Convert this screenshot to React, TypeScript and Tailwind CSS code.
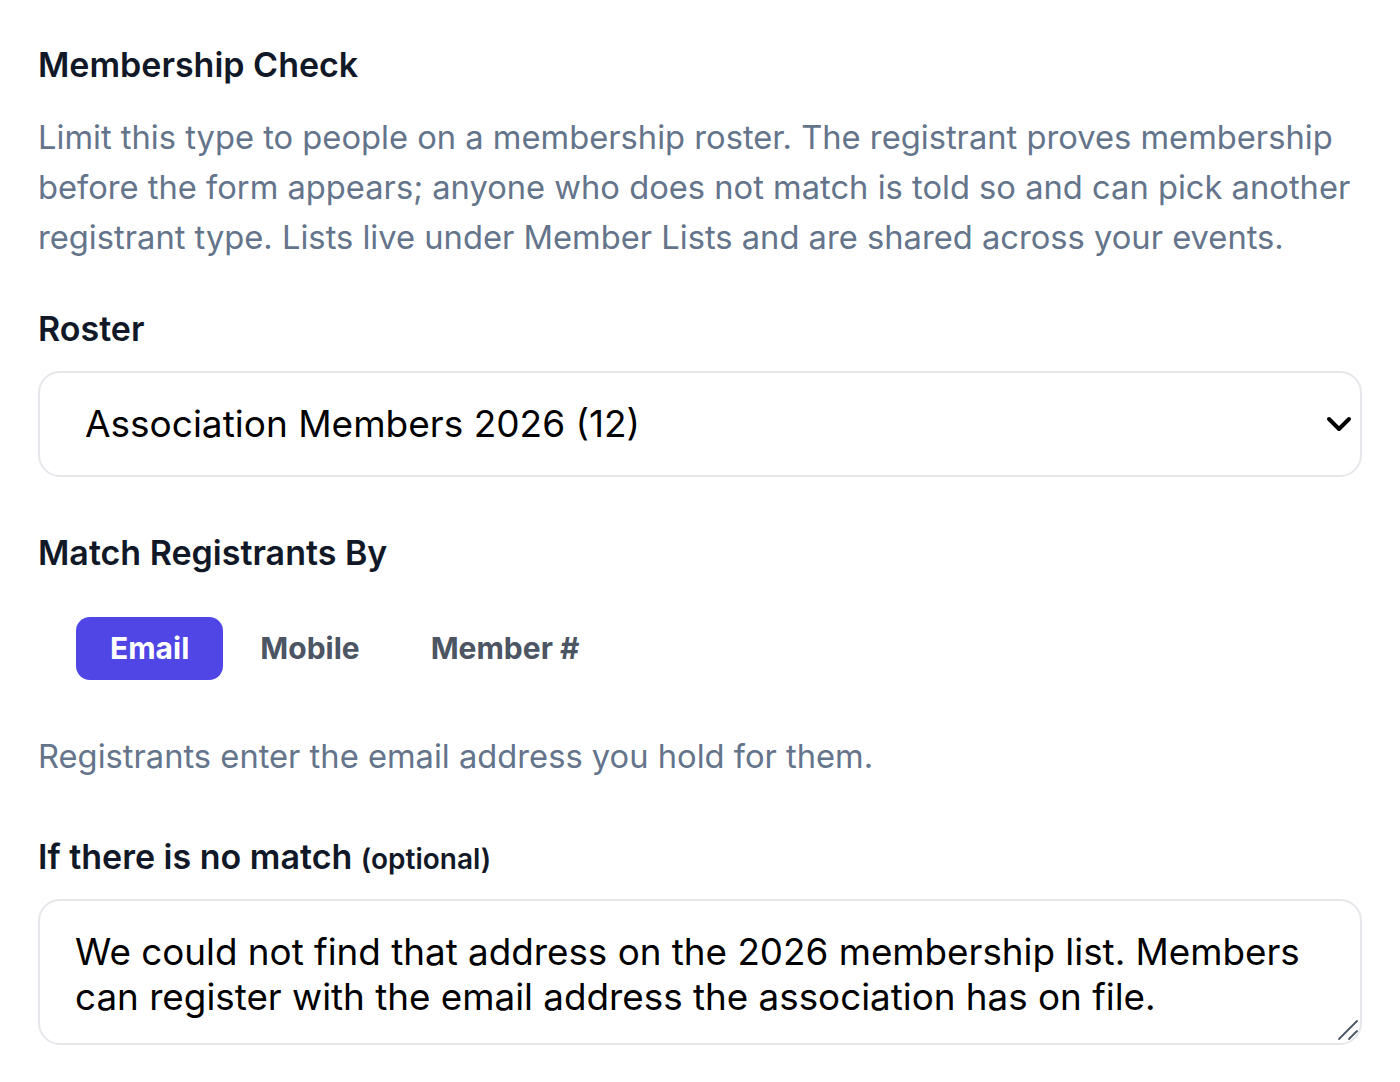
import React from "react";

export default function App() {
  return (
    <div
      className="w-[1400px] min-h-[1082px] bg-white px-[38px] pt-[43px]"
      style={{ fontFamily: "Inter, 'Noto Sans', sans-serif" }}
    >
      <h2 className="text-[34px] leading-[44px] font-semibold text-[#111827]">Membership Check</h2>
      <p className="mt-[25px] text-[32.7px] leading-[50px] text-[#64748b]">
        Limit this type to people on a membership roster. The registrant proves membership before the form appears; anyone who does not match is told so and can pick another registrant type. Lists live under Member Lists and are shared across your events.
      </p>

      <div className="mt-[45px] text-[34px] leading-[44px] font-semibold text-[#111827]">Roster</div>
      <div className="relative mt-[20px]">
        <select
          className="w-full h-[106px] appearance-none rounded-[22px] border-2 border-[#e5e7eb] bg-white pl-[45px] pr-[80px] text-[37px] text-black outline-none"
          defaultValue="a"
        >
          <option value="a">Association Members 2026 (12)</option>
        </select>
        <svg
          className="pointer-events-none absolute right-[10px] top-1/2 -translate-y-1/2"
          width="26"
          height="18"
          viewBox="0 0 26 18"
          fill="none"
          stroke="black"
          strokeWidth="4"
          strokeLinecap="round"
          strokeLinejoin="round"
        >
          <path d="M3 4l10 10 10-10" />
        </svg>
      </div>

      <div className="mt-[54px] text-[34px] leading-[44px] font-semibold text-[#111827]">Match Registrants By</div>
      <div className="mt-[42px] flex items-center gap-[3px] pl-[38px]">
        <button className="h-[63px] rounded-[14px] bg-[#4f46e5] px-[34px] text-[30px] font-bold text-white">Email</button>
        <button className="h-[63px] rounded-[14px] px-[34px] text-[30px] font-bold text-[#4b5563]">Mobile</button>
        <button className="h-[63px] rounded-[14px] px-[34px] text-[30px] font-bold text-[#4b5563]">Member #</button>
      </div>

      <p className="mt-[51px] text-[32.7px] leading-[50px] text-[#64748b]">Registrants enter the email address you hold for them.</p>

      <div className="mt-[54px] text-[34px] leading-[44px] font-semibold text-[#111827]">
        If there is no match <span className="text-[28px]">(optional)</span>
      </div>
      <div className="relative mt-[18px]">
        <textarea
          className="block w-full h-[146px] resize-none rounded-[22px] border-2 border-[#e5e7eb] bg-white px-[35px] pt-[28px] text-[36.8px] leading-[45px] text-black outline-none"
          defaultValue="We could not find that address on the 2026 membership list. Members can register with the email address the association has on file."
        />
        <svg
          className="pointer-events-none absolute right-[3px] bottom-[4px]"
          width="22"
          height="22"
          viewBox="0 0 22 22"
          fill="none"
          stroke="#4b5563"
          strokeWidth="1.8"
          strokeLinecap="round"
        >
          <path d="M2 20L20 2" />
          <path d="M12 20L20 12" />
        </svg>
      </div>
    </div>
  );
}
